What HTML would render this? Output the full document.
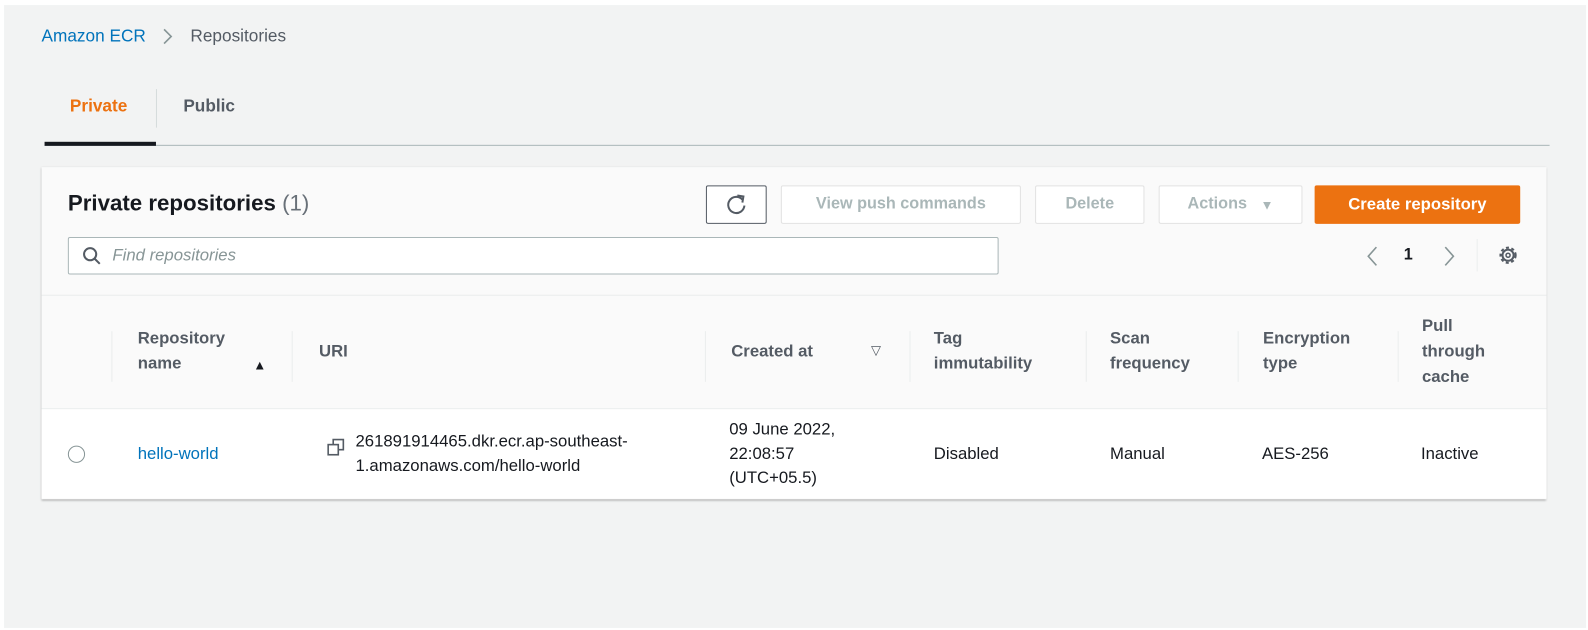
<!DOCTYPE html>
<html><head><style>
*{box-sizing:border-box;margin:0;padding:0}
body{width:1588px;height:630px;background:#fff;font-family:"Liberation Sans",sans-serif;position:relative;overflow:hidden;color:#16191f}
#w{position:absolute;left:0;top:0;width:1568px;height:622px;transform:scale(1.0128);transform-origin:0 0}
#pg{position:absolute;left:4px;top:5px;width:1562px;height:615px;background:#f2f3f3}
.a{position:absolute;white-space:nowrap}
.btn{position:absolute;height:38px;border:1px solid #e2e2e2;background:#fff;color:#aab7b8;font-weight:bold;font-size:16px;display:flex;align-items:center;justify-content:center;border-radius:2px}
.th{position:absolute;font-weight:bold;font-size:16.5px;color:#545b64;line-height:25px}
.sep{position:absolute;width:1px;background:#eaeded;top:327px;height:50px}
.td{position:absolute;font-size:16.5px;color:#16191f;line-height:24px}
</style></head><body><div id="w">
<div id="pg"></div>
<div class="a" style="left:41px;top:26px;font-size:17px;color:#0073bb">Amazon ECR</div>
<svg class="a" style="left:160px;top:27px" width="12" height="18"><path d="M2 2l7 7-7 7" fill="none" stroke="#879596" stroke-width="1.6"/></svg>
<div class="a" style="left:188px;top:26px;font-size:17px;color:#545b64">Repositories</div>
<div class="a" style="left:69px;top:95px;font-size:17px;font-weight:bold;color:#ec7211">Private</div>
<div class="a" style="left:154px;top:88px;width:1px;height:38px;background:#d5dbdb"></div>
<div class="a" style="left:181px;top:95px;font-size:17px;font-weight:bold;color:#545b64">Public</div>
<div class="a" style="left:44px;top:143px;width:1486px;height:1px;background:#aab7b8"></div>
<div class="a" style="left:44px;top:140px;width:110px;height:4px;background:#16191f"></div>

<div class="a" style="left:41px;top:165px;width:1486px;height:328px;background:#fafafa;box-shadow:0 1px 2px rgba(0,0,0,.3)"></div>
<div class="a" style="left:41px;top:403px;width:1486px;height:89px;background:#fff;border-top:1px solid #eaeded"></div>
<div class="a" style="left:41px;top:291px;width:1486px;height:1px;background:#eaeded"></div>

<div class="a" style="left:67px;top:188px;font-size:22px;font-weight:bold">Private repositories <span style="font-weight:normal;color:#687078">(1)</span></div>
<div class="btn" style="left:697px;top:183px;width:60px;border-color:#545b64"><svg width="22" height="22" viewBox="0 0 22 22"><path d="M17 6A8 8 0 1 0 19 12" fill="none" stroke="#545b64" stroke-width="2"/><path d="M12 2l6 1-1 6" fill="none" stroke="#545b64" stroke-width="2"/></svg></div>
<div class="btn" style="left:771px;top:183px;width:237px">View push commands</div>
<div class="btn" style="left:1022px;top:183px;width:108px">Delete</div>
<div class="btn" style="left:1144px;top:183px;width:142px">Actions&nbsp;&nbsp;&nbsp;<span style="font-size:13px">▼</span></div>
<div class="btn" style="left:1298px;top:183px;width:203px;background:#ec7211;border-color:#ec7211;color:#fff;font-size:16.5px">Create repository</div>

<div class="a" style="left:67px;top:234px;width:919px;height:37px;background:#fff;border:1px solid #aab7b8;border-radius:2px"></div>
<svg class="a" style="left:81px;top:243px" width="20" height="20"><circle cx="8" cy="8" r="6" fill="none" stroke="#545b64" stroke-width="2"/><path d="M12.5 12.5l5 5" stroke="#545b64" stroke-width="2"/></svg>
<div class="a" style="left:111px;top:243px;font-size:16.5px;font-style:italic;color:#879596">Find repositories</div>

<svg class="a" style="left:1348px;top:242px" width="14" height="22"><path d="M11 2L3 11l8 9" fill="none" stroke="#879596" stroke-width="1.6"/></svg>
<div class="a" style="left:1386px;top:243px;font-size:16px;font-weight:bold">1</div>
<svg class="a" style="left:1424px;top:242px" width="14" height="22"><path d="M3 2l8 9-8 9" fill="none" stroke="#879596" stroke-width="1.6"/></svg>
<div class="a" style="left:1458px;top:236px;width:1px;height:32px;background:#eaeded"></div>
<svg class="a" style="left:1479px;top:242px" width="20" height="20" viewBox="0 0 20 20"><circle cx="10" cy="10" r="7.5" fill="none" stroke="#545b64" stroke-width="2" stroke-dasharray="3 2.5"/><circle cx="10" cy="10" r="5.5" fill="none" stroke="#545b64" stroke-width="2"/><circle cx="10" cy="10" r="2" fill="none" stroke="#545b64" stroke-width="1.5"/></svg>

<div class="sep" style="left:110px"></div>
<div class="sep" style="left:288px"></div>
<div class="sep" style="left:696px"></div>
<div class="sep" style="left:898px"></div>
<div class="sep" style="left:1072px"></div>
<div class="sep" style="left:1222px"></div>
<div class="sep" style="left:1380px"></div>
<div class="th" style="left:136px;top:322px">Repository<br>name</div>
<div class="a" style="left:250px;top:353px;font-size:13px">▲</div>
<div class="th" style="left:315px;top:335px">URI</div>
<div class="th" style="left:722px;top:335px">Created at</div>
<div class="a" style="left:860px;top:338px;font-size:13px;color:#545b64">▽</div>
<div class="th" style="left:922px;top:322px">Tag<br>immutability</div>
<div class="th" style="left:1096px;top:322px">Scan<br>frequency</div>
<div class="th" style="left:1247px;top:322px">Encryption<br>type</div>
<div class="th" style="left:1404px;top:310px">Pull<br>through<br>cache</div>

<div class="a" style="left:67px;top:440px;width:17px;height:17px;border:1px solid #879596;border-radius:50%;background:#fff"></div>
<div class="td" style="left:136px;top:436px;color:#0073bb">hello-world</div>
<svg class="a" style="left:323px;top:433px" width="18" height="18"><rect x="1" y="6" width="10" height="10" fill="none" stroke="#545b64" stroke-width="1.6"/><path d="M6 6V1h10v10h-5" fill="none" stroke="#545b64" stroke-width="1.6"/></svg>
<div class="td" style="left:351px;top:424px">261891914465.dkr.ecr.ap-southeast-<br>1.amazonaws.com/hello-world</div>
<div class="td" style="left:720px;top:412px">09 June 2022,<br>22:08:57<br>(UTC+05.5)</div>
<div class="td" style="left:922px;top:436px">Disabled</div>
<div class="td" style="left:1096px;top:436px">Manual</div>
<div class="td" style="left:1246px;top:436px">AES-256</div>
<div class="td" style="left:1403px;top:436px">Inactive</div>
</div></body></html>
